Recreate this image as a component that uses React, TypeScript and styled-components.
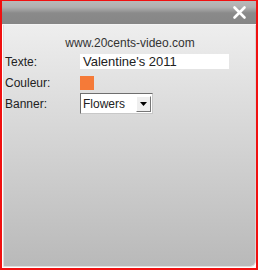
import React from "react";
import styled, { createGlobalStyle } from "styled-components";

const Global = createGlobalStyle`
  html, body { margin: 0; padding: 0; background: #fff; }
  body { font-family: "Liberation Sans", Arial, sans-serif; }
`;

const Frame = styled.div`
  width: 258px;
  height: 270px;
  box-sizing: border-box;
  border: 2px solid #f01010;
  border-top-width: 1px;
  display: flex;
  flex-direction: column;
  background: #fff;
`;

const TitleBar = styled.div`
  height: 23px;
  flex: none;
  display: flex;
  justify-content: flex-end;
  align-items: center;
  padding-right: 9px;
  background: linear-gradient(
    to bottom,
    #b9b9b9 0px,
    #b0b0b0 6px,
    #989898 10px,
    #8a8a8a 12px,
    #868686 23px
  );
  border-bottom: 1px solid #f4f4f4;
`;

const Close = styled.svg`
  width: 15px;
  height: 15px;
  display: block;
`;

const Body = styled.div`
  flex: 1;
  margin: 0 0 1px 1px;
  border-right: 1px solid #d6d6d6;
  border-bottom: 1px solid #dedede;
  border-left: 1px solid #dcdcdc;
  border-bottom-right-radius: 6px;
  background: linear-gradient(to bottom, #eeeeee 0%, #d6d6d6 45%, #b9b9b9 100%);
  padding: 11px 0 0 1px;
  color: #222;
  font-size: 12px;
`;

const Url = styled.div`
  text-align: center;
  line-height: 14px;
  margin-bottom: 4px;
  color: #333;
`;

const Row = styled.div<{ $h: number; $gap: number }>`
  display: flex;
  align-items: center;
  height: ${(p) => p.$h}px;
  margin-top: ${(p) => p.$gap}px;
`;

const Label = styled.div`
  width: 75px;
  flex: none;
  line-height: 14px;
`;

const TextInput = styled.div`
  width: 149px;
  height: 15px;
  box-sizing: border-box;
  background: #fff;
  padding-left: 3px;
  line-height: 15px;
  font-size: 13px;
  color: #222;
`;

const Swatch = styled.div<{ $color: string }>`
  width: 14px;
  height: 14px;
  background: ${(p) => p.$color};
`;

const Select = styled.div`
  width: 73px;
  height: 21px;
  box-sizing: border-box;
  background: #fff;
  border: 1px solid #6e6e6e;
  border-right-color: #c8c8c8;
  border-bottom-color: #c8c8c8;
  display: flex;
  align-items: center;
  justify-content: space-between;
  padding-left: 2px;
  font-size: 12px;
`;

const Arrow = styled.div`
  width: 15px;
  height: 16px;
  margin-right: 1px;
  box-sizing: border-box;
  background: #efefef;
  border: 1px solid #fff;
  border-right-color: #777;
  border-bottom-color: #777;
  display: flex;
  align-items: center;
  justify-content: center;
`;

export default function App() {
  return (
    <>
      <Global />
      <Frame>
        <TitleBar>
          <Close viewBox="0 0 15 15">
            <path d="M2.5 2.5 L12.5 12.5 M12.5 2.5 L2.5 12.5" stroke="#fff" strokeWidth="2.6" strokeLinecap="round" />
          </Close>
        </TitleBar>
        <Body>
          <Url>www.20cents-video.com</Url>
          <Row $h={15} $gap={0}>
            <Label>Texte:</Label>
            <TextInput>Valentine's 2011</TextInput>
          </Row>
          <Row $h={14} $gap={7}>
            <Label>Couleur:</Label>
            <Swatch $color="#f57a38" />
          </Row>
          <Row $h={21} $gap={3}>
            <Label>Banner:</Label>
            <Select>
              <span>Flowers</span>
              <Arrow>
                <svg width="7" height="4" viewBox="0 0 7 4">
                  <path d="M0 0 H7 L3.5 4 Z" fill="#000" />
                </svg>
              </Arrow>
            </Select>
          </Row>
        </Body>
      </Frame>
    </>
  );
}
